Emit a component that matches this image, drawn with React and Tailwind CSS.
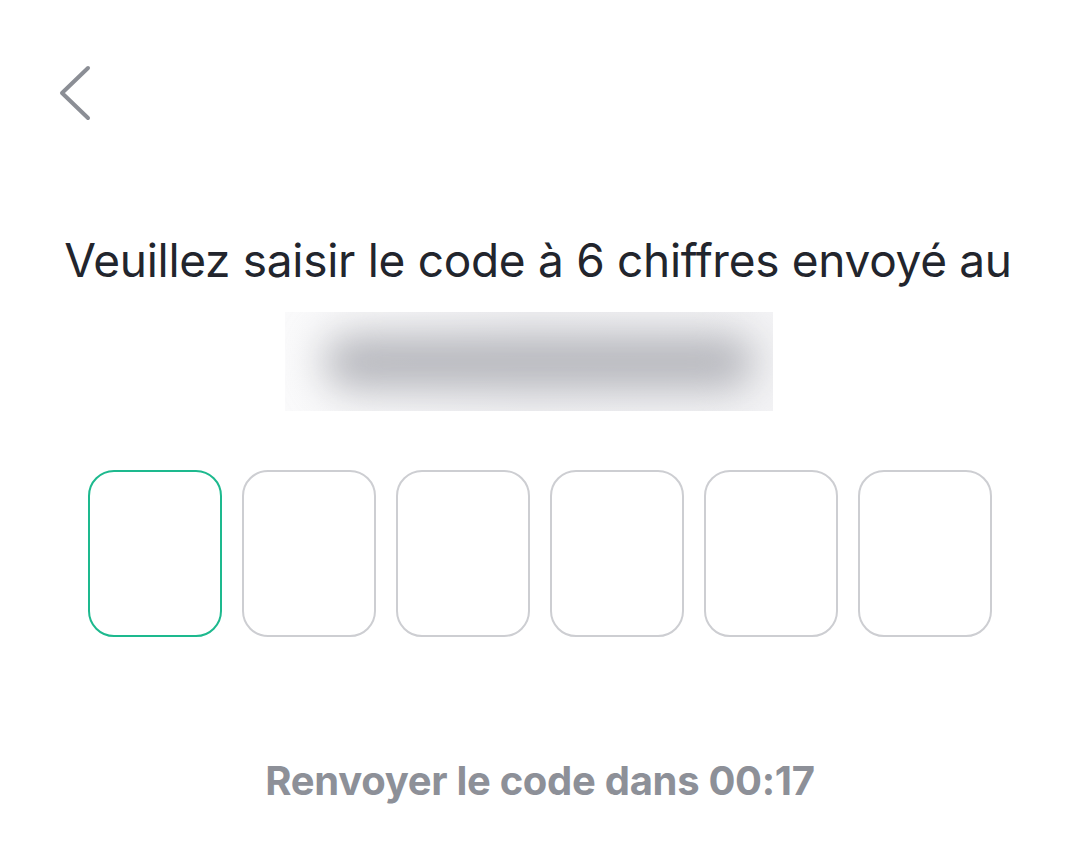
import React from 'react';

const BackIcon = () => (
  <svg width="40" height="60" viewBox="0 0 40 60" fill="none">
    <path d="M32 5 L6 30 L32 55" stroke="#8b8e95" strokeWidth="4" strokeLinecap="round" strokeLinejoin="round" />
  </svg>
);

export default function App() {
  const digits = [0, 1, 2, 3, 4, 5];

  return (
    <div className="w-[1080px] h-[864px] bg-white flex flex-col" style={{ fontFamily: 'Inter, "Noto Sans", sans-serif' }}>
      {/* header */}
      <div className="pl-[56px] pt-[63px] h-[126px]">
        <BackIcon />
      </div>

      {/* prompt */}
      <div className="mt-[104px] flex flex-col items-center">
        <p className="text-[46px] leading-[60px] text-[#22252d] tracking-[-0.3px] ml-[-4px]">
          Veuillez saisir le code à 6 chiffres envoyé au
        </p>
        <div className="mt-[22px] ml-[-22px] w-[488px] h-[99px] bg-gradient-to-r from-[#fafafb] via-[#f1f1f3] to-[#f3f3f5] overflow-hidden flex items-center justify-center">
          <div className="w-[430px] h-[52px] ml-[20px] rounded-full bg-[#b3b4ba] blur-[20px]" />
        </div>
      </div>

      {/* code boxes */}
      <div className="mt-[59px] flex justify-center gap-[20px]">
        {digits.map((d) => (
          <div
            key={d}
            className={
              d === 0
                ? 'w-[134px] h-[167px] rounded-[26px] border-[2.5px] border-[#1db98e]'
                : 'w-[134px] h-[167px] rounded-[26px] border-[2.5px] border-[#cdced2]'
            }
          />
        ))}
      </div>

      {/* resend */}
      <p className="mt-[114px] text-center text-[40px] font-bold text-[#8d9098] tracking-[-0.3px]">
        Renvoyer le code dans 00:17
      </p>
    </div>
  );
}
